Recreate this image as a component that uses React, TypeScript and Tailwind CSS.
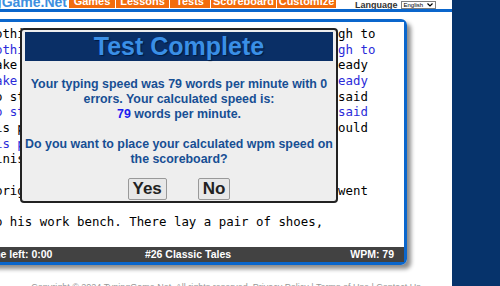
import React from 'react';

const tabs = [
  { label: 'Games', cls: 'w-[46px]' },
  { label: 'Lessons', cls: 'w-[53px]' },
  { label: 'Tests', cls: 'w-[40px]' },
  { label: 'Scoreboard', cls: 'w-[65px]' },
  { label: 'Customize', cls: 'w-[59px]' },
];

// source text, already wrapped the way the test box wraps it
const source = [
  ' nothing left but some leather, just barely enough to',
  ' make one pair of shoes. He cut them out to be ready',
  ' to start sewing early the next morning, and he said',
  ' his prayers, went to bed and slept, hoping he could',
  ' finish them in the morning.',
  'A bright morning came and early the old cobbler went',
  ' to his work bench. There lay a pair of shoes,',
];

const typed = [source[0], source[1], source[2], ' his prayers, went to bed and sl', '', '', ''];

const App: React.FC = () => {
  return (
    <div className="relative flex h-[286px] w-[500px] overflow-hidden bg-white font-['Liberation_Sans',Arial,sans-serif]">
      <div className="w-[452px] shrink-0">
        {/* Header (page is scrolled, top is cut off) */}
        <div className="flex h-[9px] items-start overflow-hidden">
          <div className="flex h-[9px] w-[67px] items-start justify-end overflow-hidden">
            <span className="-mt-[6.5px] whitespace-nowrap text-[14px] font-bold leading-[16px] text-[#3d8fe0]">
              TypingGame.Net
            </span>
          </div>
          <div className="ml-[2px] flex gap-[1px]">
            {tabs.map((t) => (
              <div
                key={t.label}
                className={`${t.cls} flex h-[8px] items-start justify-center overflow-hidden bg-[#f36c0c]`}
              >
                <span className="-mt-[4.5px] text-[11px] font-bold leading-[11px] text-white">{t.label}</span>
              </div>
            ))}
          </div>
          <div className="ml-[19px] flex items-center gap-[3px] pt-[1px]">
            <span className="text-[9px] font-bold leading-[8px] text-[#333]">Language</span>
            <div className="flex h-[8px] w-[35px] items-center justify-between border border-[#808080] bg-white px-[2px]">
              <span className="text-[6px] leading-[6px] text-black">English</span>
              <svg width="6" height="4" viewBox="0 0 6 4">
                <path d="M0.5 0.5 L3 3 L5.5 0.5" fill="none" stroke="#000" strokeWidth="1.2" />
              </svg>
            </div>
          </div>
        </div>
        <div className="h-[3px] bg-[#0a66cc]" />

        {/* Typing test box */}
        <div className="-ml-[27px] mt-[7px] w-[434px] rounded-r-[6px] border-[3px] border-[#0a66cc] shadow-[4px_4px_4px_rgba(0,0,0,0.45)]">
          <div className="bg-white pb-[2px] pl-[4px] pt-[4px] font-['DejaVu_Sans_Mono',monospace] text-[12.4px]">
            {source.map((s, i) => (
              <React.Fragment key={i}>
                <div className="h-[15.67px] whitespace-pre leading-[15.67px] text-black">{s}</div>
                <div className="h-[15.67px] whitespace-pre leading-[15.67px] text-[#2b2bd9]">{typed[i]}</div>
              </React.Fragment>
            ))}
          </div>
          <div className="grid h-[15px] grid-cols-[1fr_auto_1fr] items-center bg-[#424242] pl-[6px] pr-[10px] text-[10.5px] font-bold leading-[15px] text-white">
            <span>Time left: 0:00</span>
            <span>#26 Classic Tales</span>
            <span className="text-right">WPM: 79</span>
          </div>
        </div>

        <p className="mt-[16px] whitespace-nowrap text-center text-[9px] leading-[12px] text-[#999]">
          Copyright © 2024 TypingGame.Net. All rights reserved. Privacy Policy | Terms of Use | Contact Us
        </p>
      </div>

      <div className="flex-1 bg-[#06336b]" />

      {/* Result dialog */}
      <div className="absolute left-[20px] top-[28px] flex h-[175px] w-[318px] flex-col rounded-[4px] border-2 border-[#222] bg-[#eeeeee] px-[3px] pt-[2px]">
        <div className="flex h-[29px] items-center justify-center bg-[#0a2f66]">
          <h1 className="text-[25px] font-bold leading-[29px] text-[#3a8fe6] [text-shadow:1px_1px_1px_#001a40]">
            Test Complete
          </h1>
        </div>
        <div className="mt-[15.5px] flex flex-col items-center whitespace-nowrap text-[12.4px] font-bold leading-[15px] text-[#174f94]">
          <p>Your typing speed was 79 words per minute with 0</p>
          <p>errors. Your calculated speed is:</p>
          <p>
            <span className="text-[#1a1aee]">79</span> words per minute.
          </p>
          <p className="h-[15px]" />
          <p>Do you want to place your calculated wpm speed on</p>
          <p>the scoreboard?</p>
        </div>
        <div className="mt-[11.5px] flex justify-center gap-[31px]">
          <button className="h-[22px] rounded-[2px] border border-[#999] bg-[#e8e8e8] px-[4px] text-[17px] font-bold leading-[20px] text-[#222]">
            Yes
          </button>
          <button className="h-[22px] rounded-[2px] border border-[#999] bg-[#e8e8e8] px-[4px] text-[17px] font-bold leading-[20px] text-[#222]">
            No
          </button>
        </div>
      </div>
    </div>
  );
};

export default App;
